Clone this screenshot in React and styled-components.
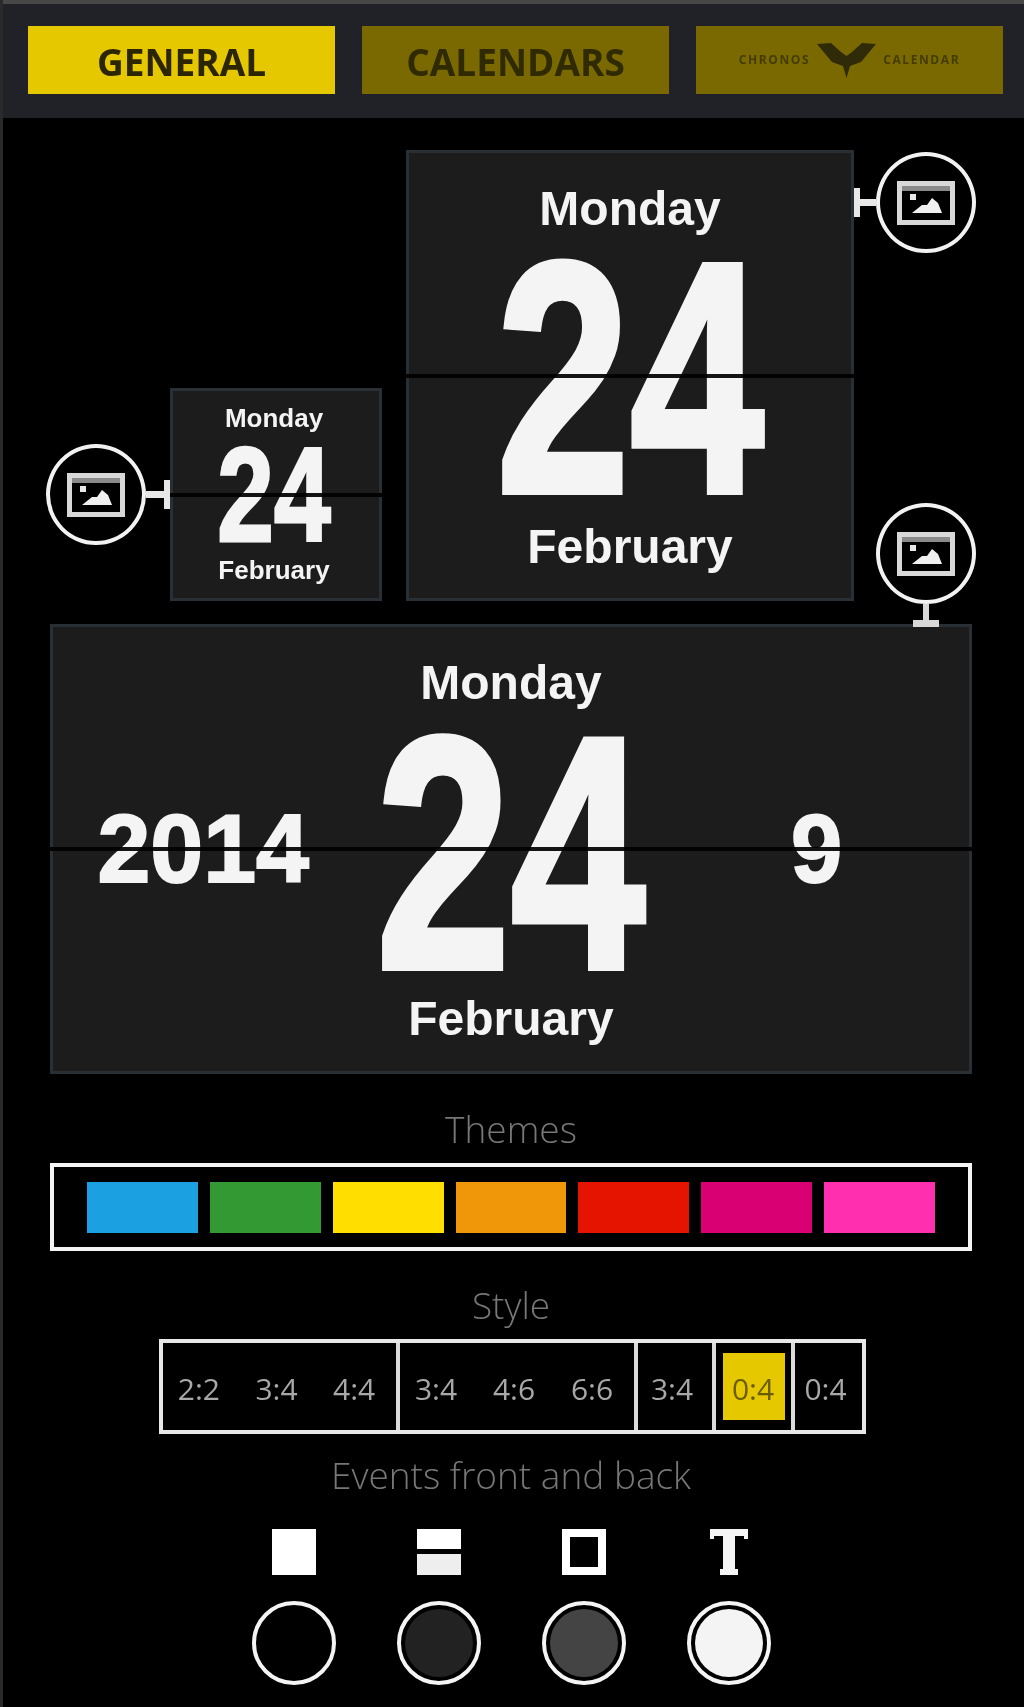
import React from "react";
import styled, { createGlobalStyle } from "styled-components";

const Global = createGlobalStyle`
  html, body { margin: 0; padding: 0; background: #000; }
  * { box-sizing: border-box; }
`;

const Page = styled.div`
  width: 1024px;
  height: 1707px;
  overflow: hidden;
  background: #000;
  border-left: 3px solid #2a2a2a;
  font-family: "Open Sans", "Liberation Sans", sans-serif;
  filter: blur(0.6px);
`;

const Header = styled.header`
  height: 118px;
  background: #212228;
  border-top: 4px solid #484848;
  display: flex;
  gap: 27px;
  padding: 22px 0 0 25px;
`;

const Tab = styled.div`
  width: 307px;
  height: 68px;
  display: flex;
  align-items: center;
  justify-content: center;
  gap: 7px;
  padding-top: ${(p) => (p.$logo ? 0 : 3)}px;
  background: ${(p) => (p.$active ? "#e6c800" : "#7a6900")};
  color: ${(p) => (p.$active ? "#2b2500" : "#2f2a00")};
  font-size: 37px;
  font-weight: 700;
  line-height: 1;
`;

const TinyWord = styled.span`
  font-size: 12px;
  font-weight: 700;
  letter-spacing: 1.6px;
  color: #443c00;
`;

const TopRow = styled.div`
  display: flex;
  height: 474px;
  margin-top: 32px;
  padding-left: 43px;
`;

const LeftGroup = styled.div`
  display: flex;
  align-items: center;
  height: 213px;
  margin-top: 238px;
`;

const RightColumn = styled.div`
  display: flex;
  flex-direction: column;
`;

const RightTop = styled.div`
  display: flex;
  align-items: center;
  margin-top: 2px;
`;

const RightBottom = styled.div`
  display: flex;
  flex-direction: column;
  align-items: center;
  width: 100px;
  margin: 250px 0 0 22px;
`;

const CircleButton = styled.div`
  width: 100px;
  height: 101px;
  flex: none;
  border: 4px solid #f2f2f2;
  border-radius: 50%;
  display: flex;
  align-items: center;
  justify-content: center;
  background: #000;
`;

const HStem = styled.div`
  width: ${(p) => p.$len}px;
  height: 7px;
  flex: none;
  position: relative;
  background: #e8e8e8;
  &::after {
    content: "";
    position: absolute;
    top: -11px;
    ${(p) => (p.$toLeft ? "left: 0;" : "right: 0;")}
    width: 6px;
    height: 29px;
    background: #e8e8e8;
  }
`;

const VStem = styled.div`
  width: 6px;
  height: 21px;
  position: relative;
  background: #d8d8d8;
  z-index: 2;
  &::after {
    content: "";
    position: absolute;
    left: -10px;
    bottom: -2px;
    width: 26px;
    height: 7px;
    background: #d8d8d8;
  }
`;

const FlipCard = styled.section`
  position: relative;
  flex: none;
  width: ${(p) => p.$w}px;
  height: ${(p) => p.$h}px;
  margin-left: ${(p) => p.$ml || 0}px;
  padding-top: ${(p) => p.$pt}px;
  padding-right: ${(p) => p.$pr || 0}px;
  background: #1c1c1c;
  border: 3px solid #283036;
  color: #f4f4f4;
  font-family: "Liberation Sans", Arial, sans-serif;
  font-weight: 700;
  text-align: center;
`;

const FoldLine = styled.div`
  position: absolute;
  left: -3px;
  right: -3px;
  top: calc(50% - 2px);
  height: 4px;
  background: rgba(0, 0, 0, 0.92);
`;

const Word = styled.div`
  font-size: ${(p) => p.$size}px;
  line-height: ${(p) => p.$line}px;
  margin-top: ${(p) => p.$mt || 0}px;
`;

const BigDigits = styled.div`
  display: flex;
  justify-content: center;
  font-size: ${(p) => p.$size}px;
  line-height: ${(p) => p.$line}px;
  margin-top: ${(p) => p.$mt}px;
  transform: scaleX(${(p) => p.$sx});
  white-space: nowrap;
  -webkit-text-stroke: ${(p) => p.$stroke}px #f4f4f4;
`;

const WideRow = styled.div`
  display: grid;
  grid-template-columns: minmax(0, 1fr) minmax(0, 1fr) minmax(0, 1fr);
  position: absolute;
  inset: 0;
  align-items: center;
`;

const CenterStack = styled.div`
  padding-top: 31px;
  height: 100%;
`;

const SideNumber = styled.div`
  font-size: 96px;
  line-height: 1;
  margin-right: ${(p) => p.$mr || 0}px;
  transform: scaleX(${(p) => p.$sx});
  -webkit-text-stroke: 2px #f4f4f4;
`;

const Heading = styled.div`
  height: 40px;
  line-height: 40px;
  margin-top: ${(p) => p.$mt}px;
  padding-right: 5px;
  text-align: center;
  color: #777;
  font-size: 37px;
  font-weight: 300;
`;

const ThemeBox = styled.div`
  width: 922px;
  height: 88px;
  margin: 14px 0 0 47px;
  border: 4px solid #f4f4f4;
  display: flex;
  align-items: center;
  gap: 12px;
  padding: 0 33px;
`;

const Swatch = styled.div`
  flex: 1;
  height: 51px;
  background: ${(p) => p.$color};
`;

const StyleBox = styled.div`
  width: 707px;
  height: 95px;
  margin: 14px 0 0 156px;
  border: 4px solid #e8e8e8;
  display: flex;
`;

const StyleGroup = styled.div`
  flex: none;
  width: ${(p) => p.$w}px;
  display: flex;
  align-items: stretch;
  padding: ${(p) => (p.$inset ? "10px 6px 10px 7px" : "0")};
  border-left: ${(p) => (p.$first ? "none" : "4px solid #dcdcdc")};
`;

const StyleItem = styled.div`
  flex: 1;
  display: flex;
  align-items: center;
  justify-content: center;
  padding: 4px ${(p) => (p.$on ? 2 : 6)}px 0 0;
  font-size: 30px;
  color: ${(p) => (p.$on ? "#6a5d00" : "#a8a8a8")};
  background: ${(p) => (p.$on ? "#e6c800" : "transparent")};
`;

const EventGrid = styled.div`
  width: 580px;
  margin: 34px 0 0 218px;
  display: grid;
  grid-template-columns: repeat(4, 145px);
  grid-template-rows: 46px 84px;
  row-gap: 26px;
  justify-items: center;
`;

const EventCircle = styled.div`
  width: 84px;
  height: 84px;
  border: 4px solid #f4f4f4;
  border-radius: 50%;
  padding: 4px;
  &::before {
    content: "";
    display: block;
    width: 100%;
    height: 100%;
    border-radius: 50%;
    background: ${(p) => p.$fill};
  }
`;

const ImageIcon = () => (
  <svg width="58" height="44" viewBox="0 0 58 44">
    <rect x="2.5" y="2.5" width="53" height="39" fill="none" stroke="#d8d8d8" strokeWidth="5" />
    <rect x="5" y="5" width="48" height="5" fill="#8a8a8a" />
    <rect x="13" y="13" width="6" height="6" fill="#e8e8e8" />
    <path d="M15 32 L25 24 L30 24 L35 17 L41 22 L45 32 Z" fill="#f0f0f0" />
  </svg>
);

const WingLogo = () => (
  <svg width="59" height="36" viewBox="0 0 59 36">
    <path
      d="M0 2 L14 1 L24 10 L29.5 14 L35 10 L45 1 L59 2 L44 20 L33 24 L29.5 36 L26 24 L15 20 Z"
      fill="#2f2a08"
    />
  </svg>
);

const SolidIcon = () => (
  <svg width="44" height="46" viewBox="0 0 44 46">
    <rect width="44" height="46" fill="#fff" />
  </svg>
);
const SplitIcon = () => (
  <svg width="44" height="46" viewBox="0 0 44 46">
    <rect width="44" height="20" fill="#fff" />
    <rect y="25" width="44" height="21" fill="#eee" />
  </svg>
);
const HollowIcon = () => (
  <svg width="44" height="46" viewBox="0 0 44 46">
    <rect x="4" y="4" width="36" height="38" fill="none" stroke="#fff" strokeWidth="8" />
  </svg>
);
const SerifTIcon = () => (
  <svg width="38" height="46" viewBox="0 0 38 46">
    <path d="M0 0 H38 V10 H34 V7 H25 V40 H28 V46 H10 V40 H13 V7 H4 V10 H0 Z" fill="#f4f4f4" />
  </svg>
);

const themes = ["#1ba1e2", "#339933", "#ffde00", "#f09609", "#e51400", "#d80073", "#ff2fb0"];
const styleGroups = [
  { w: 233, items: ["2:2", "3:4", "4:4"] },
  { w: 238, items: ["3:4", "4:6", "6:6"] },
  { w: 78, items: ["3:4"] },
  { w: 79, items: ["0:4"], on: true },
  { w: 71, items: ["0:4"] },
];
const eventFills = ["#000", "#222", "#444", "#f4f4f4"];

export default function App() {
  return (
    <Page>
      <Global />
      <Header>
        <Tab $active>GENERAL</Tab>
        <Tab>CALENDARS</Tab>
        <Tab $logo>
          <TinyWord>CHRONOS</TinyWord>
          <WingLogo />
          <TinyWord>CALENDAR</TinyWord>
        </Tab>
      </Header>

      <TopRow>
        <LeftGroup>
          <CircleButton><ImageIcon /></CircleButton>
          <HStem $len={24} />
          <FlipCard $w={212} $h={213} $pt={13} $pr={4}>
            <Word $size={26} $line={28}>Monday</Word>
            <BigDigits $size={134} $line={100} $mt={13} $sx={0.76} $stroke={3}>24</BigDigits>
            <Word $size={26} $line={28} $mt={11}>February</Word>
            <FoldLine />
          </FlipCard>
        </LeftGroup>

        <FlipCard $w={448} $h={451} $ml={24} $pt={31}>
          <Word $size={48} $line={50}>Monday</Word>
          <BigDigits $size={330} $line={244} $mt={22} $sx={0.73} $stroke={6}>24</BigDigits>
          <Word $size={48} $line={50} $mt={22}>February</Word>
          <FoldLine />
        </FlipCard>

        <RightColumn>
          <RightTop>
            <HStem $toLeft $len={22} />
            <CircleButton><ImageIcon /></CircleButton>
          </RightTop>
          <RightBottom>
            <CircleButton><ImageIcon /></CircleButton>
            <VStem />
          </RightBottom>
        </RightColumn>
      </TopRow>

      <FlipCard $w={922} $h={450} $ml={47} $pt={0}>
        <WideRow>
          <SideNumber $mr={5} $sx={0.99}>2014</SideNumber>
          <CenterStack>
            <Word $size={48} $line={50}>Monday</Word>
            <BigDigits $size={332} $line={245} $mt={22} $sx={0.73} $stroke={6}>24</BigDigits>
            <Word $size={48} $line={50} $mt={19}>February</Word>
          </CenterStack>
          <SideNumber $sx={0.96}>9</SideNumber>
        </WideRow>
        <FoldLine />
      </FlipCard>

      <Heading $mt={35}>Themes</Heading>
      <ThemeBox>
        {themes.map((c) => (
          <Swatch key={c} $color={c} />
        ))}
      </ThemeBox>

      <Heading $mt={34}>Style</Heading>
      <StyleBox>
        {styleGroups.map((g, i) => (
          <StyleGroup key={i} $w={g.w} $first={i === 0} $inset={g.on}>
            {g.items.map((t, j) => (
              <StyleItem key={j} $on={g.on}>{t}</StyleItem>
            ))}
          </StyleGroup>
        ))}
      </StyleBox>

      <Heading $mt={21}>Events front and back</Heading>
      <EventGrid>
        <SolidIcon />
        <SplitIcon />
        <HollowIcon />
        <SerifTIcon />
        {eventFills.map((f) => (
          <EventCircle key={f} $fill={f} />
        ))}
      </EventGrid>
    </Page>
  );
}
